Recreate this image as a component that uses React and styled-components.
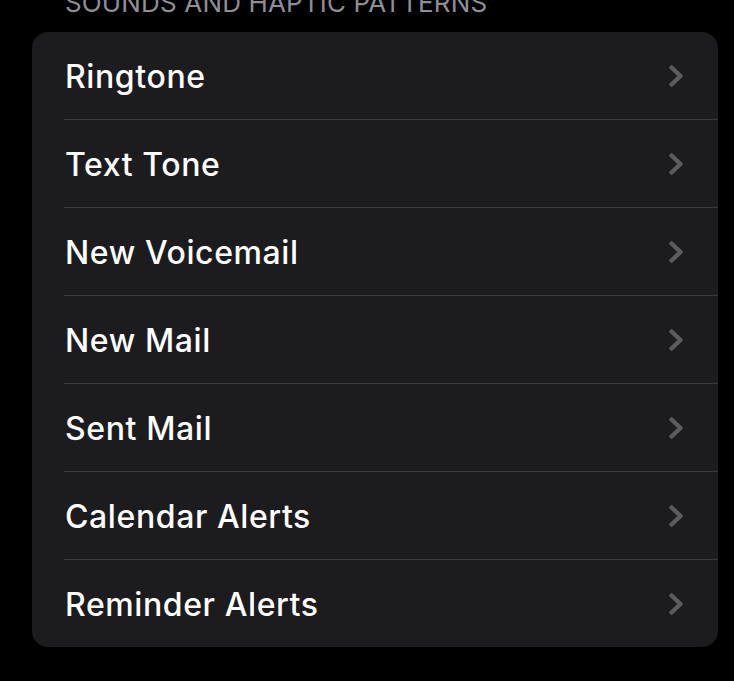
import React from 'react';
import styled, { createGlobalStyle } from 'styled-components';

const GlobalStyle = createGlobalStyle`
    html, body {
        margin: 0;
        padding: 0;
        background: #000;
    }

    body {
        font-family: Inter, "Noto Sans", "Liberation Sans", sans-serif;
        -webkit-font-smoothing: antialiased;
    }
`

const Page = styled.div`
    width: 734px;
    height: 681px;
    overflow: hidden;
    background: #000;
    padding: 0 16px 0 32px;
    box-sizing: border-box;
`

const SectionHeader = styled.div`
    margin: -10px 0 0 33px;
    height: 42px;
    font-size: 26px;
    line-height: 26px;
    letter-spacing: 0.15px;
    color: #8e8e93;
    text-transform: uppercase;
`

const Card = styled.div`
    background: #1c1c1e;
    border-radius: 16px;
    overflow: hidden;
`

const Row = styled.div`
    display: flex;
    align-items: center;
    height: ${p => p.$last ? 87 : 88}px;
    padding: 1px 34px 0 33px;
    box-sizing: border-box;
    position: relative;
    border-bottom: ${p => p.$last ? 'none' : '1px solid transparent'};

    &::after {
        content: ${p => p.$last ? 'none' : "''"};
        position: absolute;
        left: 32px;
        right: 0;
        bottom: -1px;
        height: 1px;
        background: #3a3a3c;
    }
`

const Label = styled.span`
    flex: 1;
    font-size: 32px;
    font-weight: 500;
    color: #fff;
    letter-spacing: 0.6px;
`

const Chevron = () => (
    <svg width="16" height="24" viewBox="0 0 16 24">
        <path d="M3.5 3.5 L12.5 12 L3.5 20.5" fill="none" stroke="#5b5b60"
            strokeWidth="4.4" strokeLinecap="round" strokeLinejoin="round" />
    </svg>
)

const items = [
    'Ringtone',
    'Text Tone',
    'New Voicemail',
    'New Mail',
    'Sent Mail',
    'Calendar Alerts',
    'Reminder Alerts',
]

export default function App() {
    return (
        <>
            <GlobalStyle />
            <Page>
                <SectionHeader>Sounds and Haptic Patterns</SectionHeader>
                <Card>
                    {items.map((item, i) => (
                        <Row key={item} $last={i === items.length - 1}>
                            <Label>{item}</Label>
                            <Chevron />
                        </Row>
                    ))}
                </Card>
            </Page>
        </>
    );
}
